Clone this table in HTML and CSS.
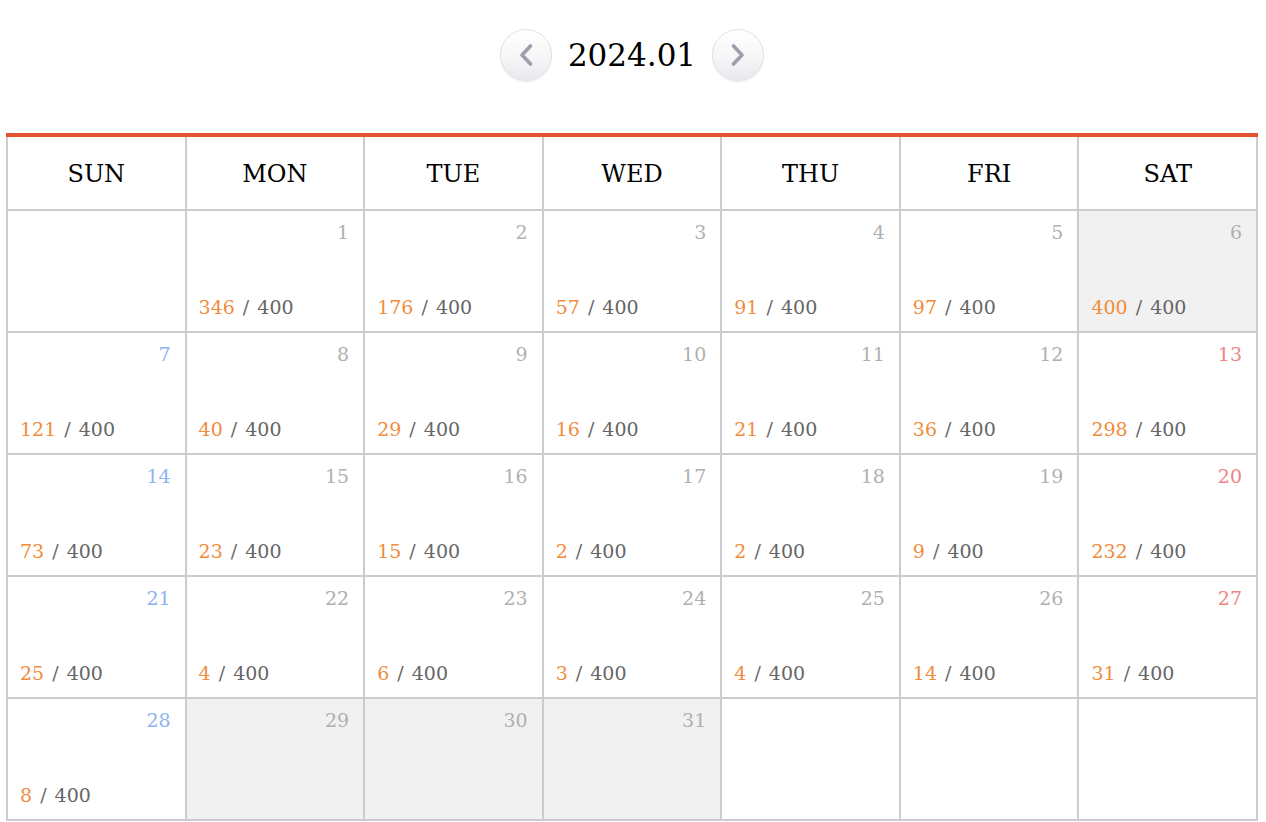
FILE: index.html
```html
<!DOCTYPE html>
<html lang="en">
<head>
<meta charset="utf-8">
<title>2024.01</title>
<link rel="stylesheet" href="styles.css">
</head>
<body>
<div class="page">
  <div class="nav">
    <button class="nav-btn" aria-label="previous month">
      <svg width="20" height="28" viewBox="0 0 20 28"><path d="M14.5 5 L6 14 L14.5 23" fill="none" stroke="#9a9eae" stroke-width="3.6" stroke-linecap="round" stroke-linejoin="round"/></svg>
    </button>
    <div class="month">2024.01</div>
    <button class="nav-btn" aria-label="next month">
      <svg width="20" height="28" viewBox="0 0 20 28"><path d="M5.5 5 L14 14 L5.5 23" fill="none" stroke="#9a9eae" stroke-width="3.6" stroke-linecap="round" stroke-linejoin="round"/></svg>
    </button>
  </div>

  <div class="cal">
    <div class="head">SUN</div>
    <div class="head">MON</div>
    <div class="head">TUE</div>
    <div class="head">WED</div>
    <div class="head">THU</div>
    <div class="head">FRI</div>
    <div class="head">SAT</div>

    <div class="cell"></div>
    <div class="cell"><div class="day">1</div><div class="count"><span class="used">346</span> / 400</div></div>
    <div class="cell"><div class="day">2</div><div class="count"><span class="used">176</span> / 400</div></div>
    <div class="cell"><div class="day">3</div><div class="count"><span class="used">57</span> / 400</div></div>
    <div class="cell"><div class="day">4</div><div class="count"><span class="used">91</span> / 400</div></div>
    <div class="cell"><div class="day">5</div><div class="count"><span class="used">97</span> / 400</div></div>
    <div class="cell off"><div class="day">6</div><div class="count"><span class="used">400</span> / 400</div></div>

    <div class="cell"><div class="day sun">7</div><div class="count"><span class="used">121</span> / 400</div></div>
    <div class="cell"><div class="day">8</div><div class="count"><span class="used">40</span> / 400</div></div>
    <div class="cell"><div class="day">9</div><div class="count"><span class="used">29</span> / 400</div></div>
    <div class="cell"><div class="day">10</div><div class="count"><span class="used">16</span> / 400</div></div>
    <div class="cell"><div class="day">11</div><div class="count"><span class="used">21</span> / 400</div></div>
    <div class="cell"><div class="day">12</div><div class="count"><span class="used">36</span> / 400</div></div>
    <div class="cell"><div class="day sat">13</div><div class="count"><span class="used">298</span> / 400</div></div>

    <div class="cell"><div class="day sun">14</div><div class="count"><span class="used">73</span> / 400</div></div>
    <div class="cell"><div class="day">15</div><div class="count"><span class="used">23</span> / 400</div></div>
    <div class="cell"><div class="day">16</div><div class="count"><span class="used">15</span> / 400</div></div>
    <div class="cell"><div class="day">17</div><div class="count"><span class="used">2</span> / 400</div></div>
    <div class="cell"><div class="day">18</div><div class="count"><span class="used">2</span> / 400</div></div>
    <div class="cell"><div class="day">19</div><div class="count"><span class="used">9</span> / 400</div></div>
    <div class="cell"><div class="day sat">20</div><div class="count"><span class="used">232</span> / 400</div></div>

    <div class="cell"><div class="day sun">21</div><div class="count"><span class="used">25</span> / 400</div></div>
    <div class="cell"><div class="day">22</div><div class="count"><span class="used">4</span> / 400</div></div>
    <div class="cell"><div class="day">23</div><div class="count"><span class="used">6</span> / 400</div></div>
    <div class="cell"><div class="day">24</div><div class="count"><span class="used">3</span> / 400</div></div>
    <div class="cell"><div class="day">25</div><div class="count"><span class="used">4</span> / 400</div></div>
    <div class="cell"><div class="day">26</div><div class="count"><span class="used">14</span> / 400</div></div>
    <div class="cell"><div class="day sat">27</div><div class="count"><span class="used">31</span> / 400</div></div>

    <div class="cell"><div class="day sun">28</div><div class="count"><span class="used">8</span> / 400</div></div>
    <div class="cell off"><div class="day">29</div></div>
    <div class="cell off"><div class="day">30</div></div>
    <div class="cell off"><div class="day">31</div></div>
    <div class="cell"></div>
    <div class="cell"></div>
    <div class="cell"></div>
  </div>
</div>
</body>
</html>
```

FILE: styles.css
```css
html, body {
  margin: 0;
  padding: 0;
  background: #ffffff;
}

body {
  font-family: "DejaVu Serif", "Liberation Serif", serif;
  color: #111;
}

.page {
  margin: 0 8px 0 6px;
}

.nav {
  display: flex;
  justify-content: center;
  align-items: center;
  gap: 16px;
  padding-top: 29px;
  height: 52px;
  margin-bottom: 52px;
}

.nav-btn {
  width: 52px;
  height: 52px;
  border-radius: 50%;
  border: 1px solid #e2e2e6;
  background: linear-gradient(180deg, #ffffff 0%, #f6f6f8 55%, #e9e9ed 100%);
  box-shadow: 0 1px 2px rgba(0, 0, 0, 0.08);
  display: flex;
  align-items: center;
  justify-content: center;
  padding: 0;
  cursor: pointer;
}

.month {
  font-size: 31px;
  line-height: 52px;
  color: #000;
}

.cal {
  display: grid;
  grid-template-columns: repeat(7, 1fr);
  grid-template-rows: 72px repeat(5, 120px);
  gap: 2px;
  background: #cccbd0;
  border-top: 4px solid #e2532d;
  padding: 0 2px 2px 2px;
}

.head {
  background: #ffffff;
  display: flex;
  align-items: center;
  justify-content: center;
  font-size: 24px;
  line-height: 28px;
  padding-top: 2px;
  color: #000;
}

.cell {
  background: #ffffff;
  display: flex;
  flex-direction: column;
  justify-content: space-between;
  padding: 10px 14px 12px 12px;
}

.cell.off {
  background: #f1f1f1;
}

.day {
  text-align: right;
  font-size: 19px;
  line-height: 23px;
  color: #b0b0b0;
}

.day.sun {
  color: #8fb3f0;
}

.day.sat {
  color: #ee8585;
}

.count {
  font-size: 19px;
  line-height: 23px;
  word-spacing: 2px;
  color: #666666;
}

.used {
  color: #f08c3c;
}
```
